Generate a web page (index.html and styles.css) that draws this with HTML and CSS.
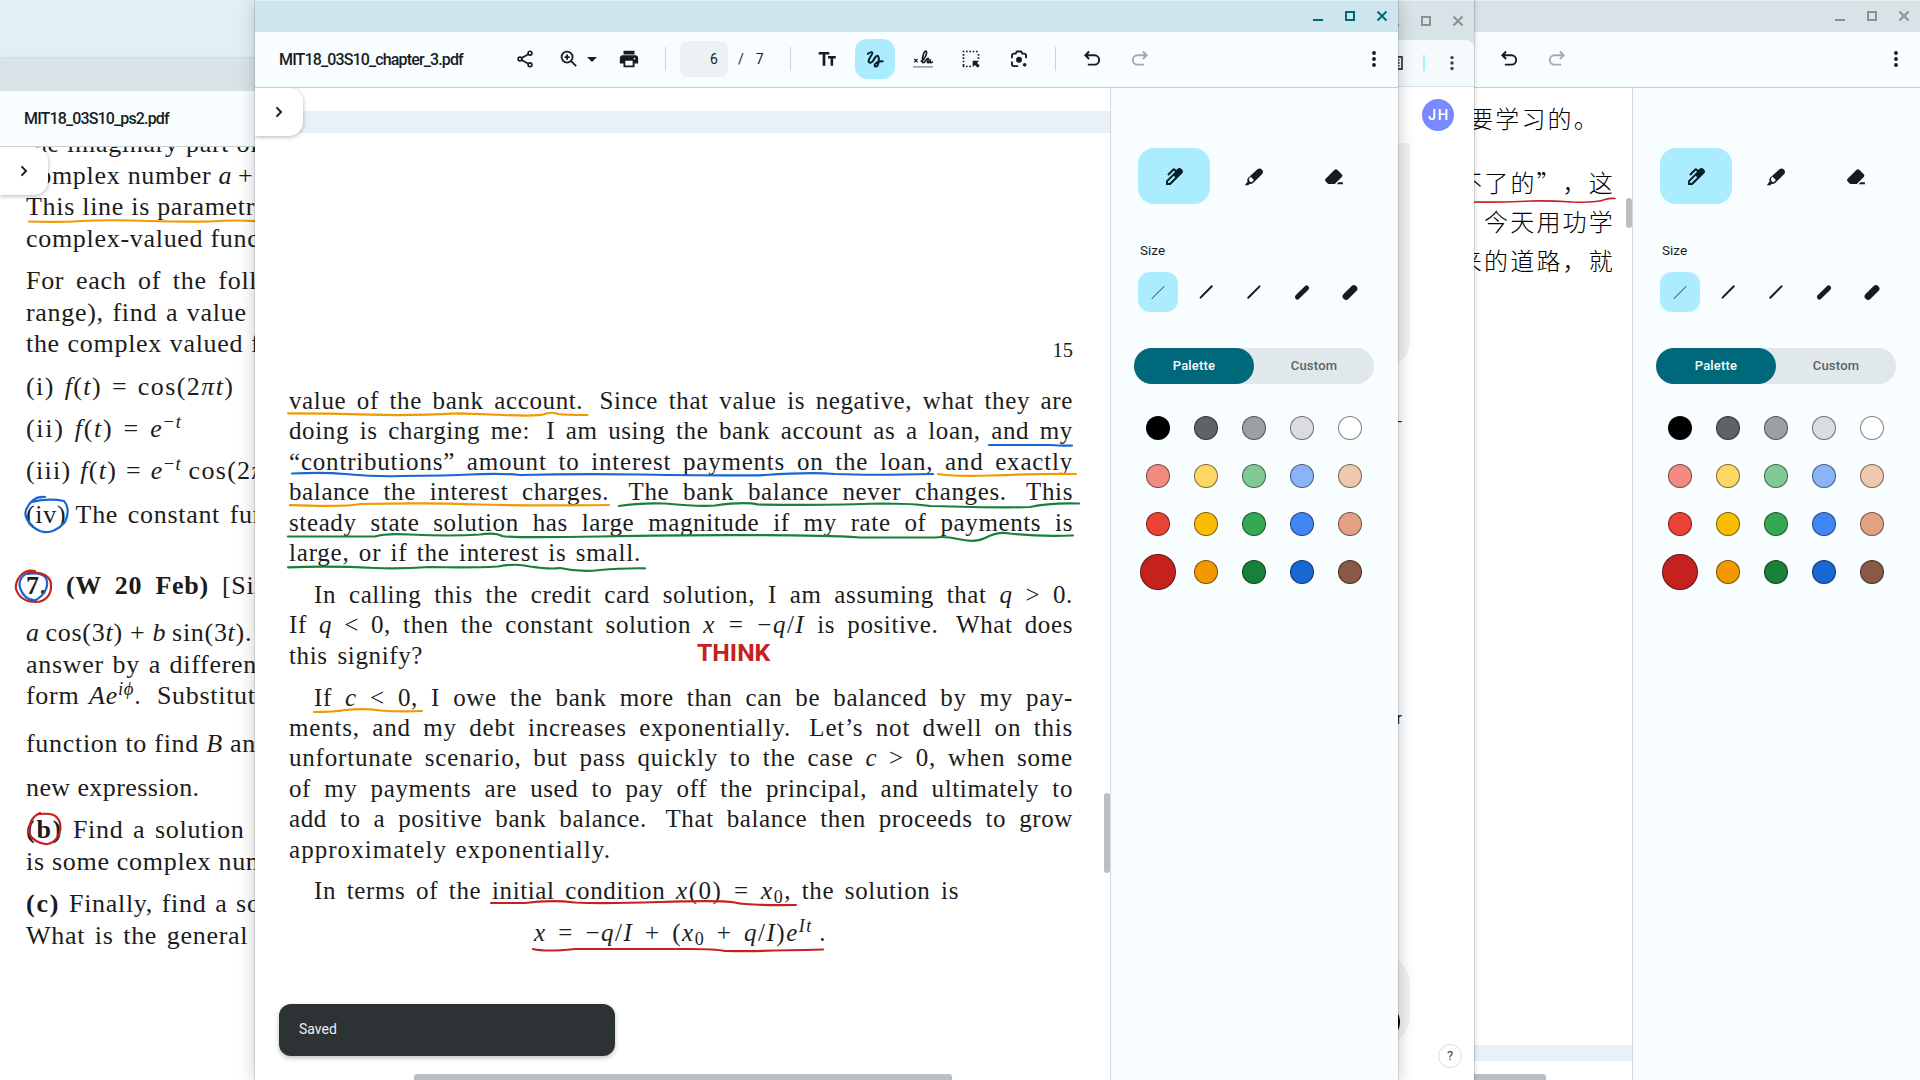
FILE: index.html
```html
<!DOCTYPE html>
<html lang="en">
<head>
<meta charset="utf-8">
<title>MIT18_03S10_chapter_3.pdf</title>
<link rel="stylesheet" href="styles.css">
</head>
<body>
<svg class="defs" width="0" height="0">
  <symbol id="share" viewBox="0 0 24 24"><g fill="none" stroke="currentColor" stroke-width="2"><circle cx="18" cy="5" r="2.3"/><circle cx="6" cy="12" r="2.3"/><circle cx="18" cy="19" r="2.3"/><path d="M8 10.8l8-4.6M8 13.2l8 4.6"/></g></symbol>
  <symbol id="zoomin" viewBox="0 0 24 24"><g fill="none" stroke="currentColor" stroke-width="2.2"><circle cx="9.7" cy="9.7" r="6.6"/><path d="M14.6 14.6l6 6M9.7 6.6v6.2M6.6 9.7h6.2"/></g></symbol>
  <symbol id="print" viewBox="0 0 24 24"><path fill="currentColor" fill-rule="evenodd" d="M18 7H6V3h12zM19 8H5c-1.7 0-3 1.3-3 3v6h4v4h12v-4h4v-6c0-1.700-1.300-3-3-3zm-3 11H8v-5h8zm2-6.500a1 1 0 1 1 0-2 1 1 0 0 1 0 2z"/></symbol>
  <symbol id="text" viewBox="0 0 24 24"><path fill="currentColor" d="M2 3.500v3.200h4.800V20h3.200V6.700h4.800V3.500zM22.500 8.500h-9.300v3h3.100V20h3.100v-8.500h3.100z"/></symbol>
  <symbol id="draw" viewBox="0 0 24 24"><path fill="none" stroke="currentColor" stroke-width="2.400" stroke-linecap="round" d="M3.500 5.800C5 4.700 7.400 2.900 8.600 4.200 10.200 6 4 11.300 4.300 14.500c.2 2.600 3 2.400 4.600.7C11.200 12.800 12 8 14.600 8c3.600 0 1.800 13-1.300 13-3.900 0-1.300-6.600 7.900-6.300"/></symbol>
  <symbol id="sign" viewBox="0 0 24 24"><path fill="none" stroke="currentColor" stroke-width="2" stroke-linecap="round" d="M10 14.800C15 12 17.800 3.200 15.500 2.500 12.500 2 9.800 15.800 12.300 16.500c2 .3 3.500-5.300 5.700-5.200 1.800.2-2 4.800-.2 5.200 1.500.2 2.500-2 3.200-4-.6 2.700-.8 4 .5 4 .7 0 1.300-.5 1.700-1"/><path stroke="currentColor" stroke-width="1.400" d="M1.500 12l4 4M5.500 12l-4 4"/><path stroke="currentColor" stroke-width="1.500" stroke-dasharray="1.300 1.100" d="M.5 21.500h23"/></symbol>
  <symbol id="select" viewBox="0 0 24 24"><path fill="none" stroke="currentColor" stroke-width="2" stroke-dasharray="2 2" d="M2 3h20M3 6v14M21 6v8M2 21h10"/><path fill="currentColor" d="M14 14h8l-2.800 2.500L22.500 20 20 22.500l-3.300-3.300L14 22z"/></symbol>
  <symbol id="lens" viewBox="0 0 24 24"><path fill="none" stroke="currentColor" stroke-width="2.200" d="M3.500 11V8c0-1.500 1-2.500 2.500-2.500h2L9.500 3h5L16 5.500h2c1.500 0 2.500 1 2.500 2.500v3M3.500 15v3c0 1.500 1 2.500 2.500 2.500h5"/><circle cx="12" cy="13" r="3.600" fill="currentColor"/><circle cx="18.800" cy="19" r="2.200" fill="currentColor"/></symbol>
  <symbol id="undo" viewBox="0 0 24 24"><path fill="none" stroke="currentColor" stroke-width="2.300" d="M8.500 3L4 7.500 8.500 12M4 7.500h11a5.600 5.600 0 0 1 0 11.200H7"/></symbol>
  <symbol id="redo" viewBox="0 0 24 24"><path fill="none" stroke="currentColor" stroke-width="2.300" d="M15.500 3L20 7.500 15.500 12M20 7.500H9a5.600 5.600 0 0 0 0 11.200h8"/></symbol>
  <symbol id="more" viewBox="0 0 24 24"><g fill="currentColor"><circle cx="12" cy="4.800" r="2.300"/><circle cx="12" cy="12" r="2.300"/><circle cx="12" cy="19.200" r="2.300"/></g></symbol>
  <symbol id="chev" viewBox="0 0 24 24"><path fill="none" stroke="currentColor" stroke-width="2.300" d="M9 6.500l5.500 5.500L9 17.500"/></symbol>
  <symbol id="pen" viewBox="0 0 24 24"><path fill="currentColor" fill-rule="evenodd" d="M2.500 21.500V16.500L13.300 5.700l-1.500-1.400-6.200 6.200-1.700-1.700 7.200-7.200 1.700.2 1.900 1.900 1.600-1.600C18 .7 19.500.9 21.300 2.700c1.800 1.800 2 3.300.7 4.700L7.800 21.500zM4.800 19.200h1.800l6.900-6.900-1.800-1.800-6.900 6.900z"/></symbol>
  <symbol id="marker" viewBox="0 0 24 24"><path fill="currentColor" fill-rule="evenodd" d="M1 21.800l3.300-4.300c-.8-2.200-.2-3.600 1-4.800L15.800 2.900c2-1.700 4-1.400 5.600.1 1.600 1.500 2 3.600.2 5.600L11.200 19c-1.300 1.300-2.700 1.500-4.400 1l-1.600 1.800zM6.300 16.500l1.800 1.800c1 0 1.600-.4 2.300-1.200l1.500-1.500-4-4-1.300 1.400c-.6.700-.8 2-.3 3.500z"/></symbol>
  <symbol id="eraser" viewBox="0 0 24 24"><path fill="currentColor" d="M5 20.500l-3-3.100c-1-1-1-2.200 0-3.200L12.700 3.300c1-1 2.200-1 3.200 0l5.400 5.400c1 1 1 2.200 0 3.200L13 20.500zM17.500 18.200h5.200v2.500h-7.500z"/></symbol>
  <symbol id="wmin" viewBox="0 0 12 12"><path stroke="currentColor" stroke-width="2" d="M1 10h10"/></symbol>
  <symbol id="wmax" viewBox="0 0 12 12"><path fill="none" stroke="currentColor" stroke-width="2" d="M2 2h8v8H2z"/></symbol>
  <symbol id="wclose" viewBox="0 0 12 12"><path stroke="currentColor" stroke-width="2" d="M1.500 1.500l9 9M10.500 1.500l-9 9"/></symbol>
</svg>

<!-- Problem set window -->
<section class="window w-ps2 inactive">
  <div class="titlebar"></div>
  <header class="toolbar"><span class="filename">MIT18_03S10_ps2.pdf</span></header>
  <div class="body">
    <main class="doc">
      <div class="page ps">
        <p class="l0">the imaginary part of</p>
        <p>complex number <i>a</i>&thinsp;<span class="op">+</span></p>
        <p>This line is parametrized</p>
        <p>complex-valued function</p>
        <p class="g10 w4">For each of the following</p>
        <p class="w1">range), find a value of</p>
        <p class="w0">the complex valued fun</p>
        <p class="g10 m1">(i) <i>f</i>(<i>t</i>) = cos(2<i>πt</i>)</p>
        <p class="g10 m2">(ii) <i>f</i>(<i>t</i>) = <i>e</i><sup>−<i>t</i></sup></p>
        <p class="g10 m3">(iii) <i>f</i>(<i>t</i>) = <i>e</i><sup>−<i>t</i></sup>&thinsp;cos(2<i>πt</i>)</p>
        <p class="g12 w2">(iv) The constant function</p>
        <p class="g40 w5"><b>7. &thinsp;(W 20 Feb)</b> [Similar</p>
        <p class="g15"><i>a</i>&thinsp;cos(3<i>t</i>) + <i>b</i>&thinsp;sin(3<i>t</i>).</p>
        <p class="w1">answer by a different</p>
        <p class="w2">form <i>Ae</i><sup><i>iϕ</i></sup>. &thinsp;Substitute</p>
        <p class="g16">function to find <i>B</i> and</p>
        <p class="g12 tight">new expression.</p>
        <p class="g11 w2"><b class="wide">(b)</b> Find a solution of</p>
        <p>is some complex number</p>
        <p class="g10 w1"><b class="wide">(c)</b> Finally, find a solution</p>
        <p class="w2">What is the general</p>
      </div>
      <svg class="ink" viewBox="0 147 855 933" width="855" height="933">
        <path class="orange" d="M29 221.500Q60 222.500 80 221 110 219.500 150 221 180 222 210 221.500 235 219.500 262 221.500"/>
        <path class="blue" d="M45 497C35 496 29 503 26 510C23 519 33 528 40 531C50 535 60 528 65 522C70 512 67 504 64 501Q48 498 32 502"/>
        <path class="blue" d="M34 572C24 572 18 579 20 588C23 596 28 601 36 600C46 594 49 585 46 578Q41 572 27 574"/>
        <path class="red" d="M35 571C22 568 15 581 16 589C19 598 27 602 36 602C45 602 51 595 51 587C52 577 43 571 28 573"/>
        <path class="red" d="M40 813C33 816 29 822 29 832C30 839 41 845 48 844C56 842 62 833 60 823C57 814 51 813 39 814"/>
      </svg>
      <button class="tab"><svg width="20" height="20"><use href="#chev"/></svg></button>
    </main>
  </div>
</section>

<!-- Chinese document window -->
<section class="window w-cn inactive">
  <div class="titlebar"><svg width="12" height="12"><use href="#wmin"/></svg><svg width="12" height="12"><use href="#wmax"/></svg><svg width="12" height="12"><use href="#wclose"/></svg></div>
  <header class="toolbar">
    <div class="tools">
      <span class="btn"><svg width="20" height="20"><use href="#undo"/></svg></span>
      <span class="btn off"><svg width="20" height="20"><use href="#redo"/></svg></span>
    </div>
    <span class="btn more"><svg width="20" height="20"><use href="#more"/></svg></span>
  </header>
  <div class="body">
    <main class="doc">
      <div class="page cn" lang="zh">
        <p class="first">要学习的。</p>
        <p class="second">不了的<span class="q">”</span>，这</p>
        <p>今天用功学</p>
        <p>来的道路，就</p>
      </div>
      <div class="pagegap"></div>
      <svg class="ink" viewBox="1400 88 232 992" width="232" height="992">
        <path class="red thin" d="M1470 202Q1500 202.500 1530 201Q1550 200.500 1572 202Q1596 203 1605 199.500Q1610 198 1615 198.500"/>
      </svg>
      <div class="vbar"></div><div class="hbar"></div>
    </main>
    <aside class="panel">
      <div class="kinds"><span class="kind on"><svg width="20" height="20"><use href="#pen"/></svg></span><span class="kind"><svg width="20" height="20"><use href="#marker"/></svg></span><span class="kind"><svg width="20" height="20"><use href="#eraser"/></svg></span></div>
      <div class="label">Size</div>
      <div class="sizes"><span class="size on"><i class="s1"></i></span><span class="size"><i class="s2"></i></span><span class="size"><i class="s3"></i></span><span class="size"><i class="s4"></i></span><span class="size"><i class="s5"></i></span></div>
      <div class="seg"><span class="on">Palette</span><span>Custom</span></div>
      <div class="swatches">
        <i class="c1"></i><i class="c2"></i><i class="c3"></i><i class="c4"></i><i class="c5"></i>
        <i class="c6"></i><i class="c7"></i><i class="c8"></i><i class="c9"></i><i class="c10"></i>
        <i class="c11"></i><i class="c12"></i><i class="c13"></i><i class="c14"></i><i class="c15"></i>
        <i class="c16 big"></i><i class="c17"></i><i class="c18"></i><i class="c19"></i><i class="c20"></i>
      </div>
    </aside>
  </div>
</section>

<!-- Chat window -->
<section class="window w-chat inactive">
  <div class="titlebar"><svg width="12" height="12"><use href="#wmin"/></svg><svg width="12" height="12"><use href="#wmax"/></svg><svg width="12" height="12"><use href="#wclose"/></svg></div>
  <div class="chatbar">
    <svg width="16" height="16" viewBox="0 0 16 16"><path fill="none" stroke="#37474b" stroke-width="1.800" d="M1 2h13v12H1zM5 5.200h6.500M5 8h6.500M5 10.800h6.500"/></svg>
    <span class="bar"></span>
    <svg width="18" height="18" viewBox="0 0 24 24"><use href="#more"/></svg>
  </div>
  <div class="chat">
    <span class="avatar">JH</span>
    <div class="card top"></div>
    <div class="frag f1">-</div>
    <div class="frag f2">r</div>
    <div class="card low"><span class="send"></span></div>
    <span class="help">?</span>
  </div>
</section>

<!-- Chapter 3 window -->
<section class="window w-main">
  <div class="titlebar"><svg width="12" height="12"><use href="#wmin"/></svg><svg width="12" height="12"><use href="#wmax"/></svg><svg width="12" height="12"><use href="#wclose"/></svg></div>
  <header class="toolbar">
    <span class="filename">MIT18_03S10_chapter_3.pdf</span>
    <div class="tools">
      <span class="btn"><svg width="20" height="20"><use href="#share"/></svg></span>
      <span class="btn z"><svg width="20" height="20"><use href="#zoomin"/></svg></span>
      <span class="caret"></span>
      <span class="btn p"><svg width="22" height="22"><use href="#print"/></svg></span>
      <span class="sep a"></span>
      <span class="pageno">6</span><span class="slash">/</span><span class="total">7</span>
      <span class="sep b"></span>
      <span class="btn"><svg width="20" height="20"><use href="#text"/></svg></span>
      <span class="btn on"><svg width="20" height="20"><use href="#draw"/></svg></span>
      <span class="btn"><svg width="20" height="20"><use href="#sign"/></svg></span>
      <span class="btn"><svg width="20" height="20"><use href="#select"/></svg></span>
      <span class="btn"><svg width="20" height="20"><use href="#lens"/></svg></span>
      <span class="sep c"></span>
      <span class="btn"><svg width="20" height="20"><use href="#undo"/></svg></span>
      <span class="btn off"><svg width="20" height="20"><use href="#redo"/></svg></span>
    </div>
    <span class="btn more"><svg width="20" height="20"><use href="#more"/></svg></span>
  </header>
  <div class="body">
    <main class="doc">
      <div class="pagegap"></div>
      <div class="page ch">
        <div class="folio">15</div>
        <p>value of the bank account. &thinsp;Since that value is negative, what they are</p>
        <p>doing is charging me: &thinsp;I am using the bank account as a loan, and my</p>
        <p class="loose">“contributions” amount to interest payments on the loan, and exactly</p>
        <p>balance the interest charges. &thinsp;The bank balance never changes. &thinsp;This</p>
        <p>steady state solution has large magnitude if my rate of payments is</p>
        <p class="short loose" style="width:352px">large, or if the interest is small.</p>
        <p class="para">In calling this the credit card solution, I am assuming that <i>q</i> &gt; 0.</p>
        <p>If <i>q</i> &lt; 0, then the constant solution <span class="math"><i>x</i> = −<i>q</i>/<i>I</i></span> is positive. &thinsp;What does</p>
        <p class="short" style="width:134px">this signify?</p>
        <p class="para">If <i>c</i> &lt; 0, I owe the bank more than can be balanced by my pay-</p>
        <p class="loose">ments, and my debt increases exponentially. &thinsp;Let’s not dwell on this</p>
        <p class="loose">unfortunate scenario, but pass quickly to the case <i>c</i> &gt; 0, when some</p>
        <p>of my payments are used to pay off the principal, and ultimately to</p>
        <p>add to a positive bank balance. &thinsp;That balance then proceeds to grow</p>
        <p class="short looser" style="width:322px">approximately exponentially.</p>
        <p class="para short" style="width:670px">In terms of the initial condition <span class="math"><i>x</i>(0) = <i>x</i><sub>0</sub></span>, the solution is</p>
        <p class="eq"><i>x</i> = −<i>q</i>/<i>I</i> + (<i>x</i><sub>0</sub> + <i>q</i>/<i>I</i>)<i>e</i><sup><i>It</i></sup>&thinsp;.</p>
      </div>
      <svg class="ink" viewBox="255 88 855 992" width="855" height="992">
        <path class="orange" d="M288 413.300Q330 413.300 370 414.600T458 413.400Q480 414 503 415Q540 416.500 545 414Q552 411.500 558 414Q565 415 587.500 415"/>
        <path class="blue" d="M989 445H1050Q1065 446 1072 445.500"/>
        <path class="blue" d="M292 473.500Q325 472 345 474Q380 477 400 476Q450 475.500 470 474.500Q500 473 520 475Q580 473.500 640 474.500Q740 476 765 475Q810 472 835 474Q870 475.500 933 474"/>
        <path class="orange" d="M938 474Q950 476.500 990 475.500Q1040 473.500 1076 474"/>
        <path class="orange" d="M290 505.200Q345 507 360 504Q430 502.500 480 504.500Q530 506 609 505"/>
        <path class="green" d="M619 506Q640 502.500 665 503.500Q700 507 715 505.500Q745 501.500 758 504.500Q830 505.500 880 503.500Q915 503.500 930 506Q1000 508 1030 507Q1050 502.500 1079 503.500"/>
        <path class="green" d="M288 536.500H375Q385 533 410 534.500Q450 536.500 480 534.500Q495 532 502 536Q510 538 600 536.500T740 535.200Q820 535 860 537.500H935Q945 536 958 539Q975 543 985 538Q998 531 1010 533.500Q1040 537 1073 535.500"/>
        <path class="green" d="M288 567.300Q330 565.500 375 568Q400 569 430 567Q470 568 498 566.500Q515 563 530 566.500Q550 569.500 560 568Q580 572.500 600 570Q620 568 645 568.300"/>
        <path class="orange" d="M314 712Q335 712 345 710Q365 708 380 710.500Q400 712 422 711"/>
        <path class="red" d="M491 903H525Q550 899.500 575 902.500Q600 904 660 902T735 902.500Q745 905.500 796 905"/>
        <path class="red" d="M533 949Q545 952 575 949H690Q715 949 725 951Q745 951.500 823 949.500"/>
      </svg>
      <div class="think">THINK</div>
      <button class="tab"><svg width="20" height="20"><use href="#chev"/></svg></button>
      <div class="vbar"></div><div class="hbar"></div>
      <div class="toast">Saved</div>
    </main>
    <aside class="panel">
      <div class="kinds"><span class="kind on"><svg width="20" height="20"><use href="#pen"/></svg></span><span class="kind"><svg width="20" height="20"><use href="#marker"/></svg></span><span class="kind"><svg width="20" height="20"><use href="#eraser"/></svg></span></div>
      <div class="label">Size</div>
      <div class="sizes"><span class="size on"><i class="s1"></i></span><span class="size"><i class="s2"></i></span><span class="size"><i class="s3"></i></span><span class="size"><i class="s4"></i></span><span class="size"><i class="s5"></i></span></div>
      <div class="seg"><span class="on">Palette</span><span>Custom</span></div>
      <div class="swatches">
        <i class="c1"></i><i class="c2"></i><i class="c3"></i><i class="c4"></i><i class="c5"></i>
        <i class="c6"></i><i class="c7"></i><i class="c8"></i><i class="c9"></i><i class="c10"></i>
        <i class="c11"></i><i class="c12"></i><i class="c13"></i><i class="c14"></i><i class="c15"></i>
        <i class="c16 big"></i><i class="c17"></i><i class="c18"></i><i class="c19"></i><i class="c20"></i>
      </div>
    </aside>
  </div>
</section>
</body>
</html>
```
FILE: styles.css
```css
* { box-sizing: border-box; }
body {
  margin: 0;
  width: 1920px;
  height: 1080px;
  overflow: hidden;
  position: relative;
  background: #e2f0f5;
  font-family: Roboto, "Liberation Sans", sans-serif;
  color: #171d1e;
}
svg { display: block; flex: none; }
.defs { position: absolute; }
p { margin: 0; }

/* windows on the desktop */
.window {
  position: absolute;
  display: flex;
  flex-direction: column;
  background: #fff;
  box-shadow: 0 0 0 1px rgba(0, 0, 0, .1), 0 2px 16px rgba(0, 0, 0, .22);
  overflow: hidden;
}
.w-ps2 { left: 0; top: 59px; width: 855px; height: 1021px; box-shadow: 0 0 0 1px rgba(0, 0, 0, .08), 0 0 6px rgba(0, 0, 0, .1); }
.w-cn { left: 1400px; top: 0; width: 520px; height: 1080px; }
.w-chat { left: 800px; top: 0; width: 674px; height: 1080px; box-shadow: 0 0 0 1px rgba(0, 0, 0, .1), 0 0 6px rgba(0, 0, 0, .2); }
.w-main { left: 255px; top: 0; width: 1143px; height: 1080px; }

.titlebar {
  flex: none;
  height: 32px;
  display: flex;
  justify-content: flex-end;
  align-items: center;
  gap: 20px;
  padding-right: 10px;
  background: #cde6ed;
  color: #00687b;
  box-shadow: inset 0 1px rgba(255, 255, 255, .35);
}
.inactive .titlebar { background: #d7e3e7; color: #899293; }
.toolbar {
  flex: none;
  height: 56px;
  display: flex;
  align-items: center;
  background: #f8fdff;
  border-bottom: 1px solid #c6d0d3;
  padding: 0 4px 1px 24px;
}
.filename { width: 220px; font-size: 16px; font-weight: 500; letter-spacing: -.86px; white-space: nowrap; }
.tools { display: flex; align-items: center; }
.btn { width: 40px; height: 40px; margin-right: 8px; border-radius: 12px; display: grid; place-items: center; flex: none; }
.btn.on { background: #abecff; color: #001f27; }
.btn.off { color: #a5abac; }
.btn.z { margin: 0 -2px 0 -4px; }
.btn.p { margin: 0 16px 0 12px; }
.btn.more { margin: 0 0 0 auto; }
.w-main .tools { margin-left: 6px; }
.w-cn .tools { margin-left: 65px; }
.caret { width: 0; border: 5px solid transparent; border-top-color: currentColor; border-bottom: 0; }
.sep { width: 1px; height: 24px; background: #cbd4d7; flex: none; }
.sep.a { margin-right: 14px; }
.sep.b { margin: 0 16px 0 26px; }
.sep.c { margin: 0 16px 0 8px; }
.pageno { width: 48px; height: 36px; border-radius: 8px; background: #ecf1f4; font-size: 14px; line-height: 36px; padding-left: 30px; }
.slash { font-size: 14px; margin-left: 10px; }
.total { font-size: 14px; margin-left: 12px; width: 8px; }

.body { flex: 1; display: flex; min-height: 0; }
.doc { flex: 1; position: relative; overflow: hidden; background: #fff; min-width: 0; }
.ink { position: absolute; left: 0; top: 0; }
.ink path { fill: none; stroke-width: 2.2; stroke-linecap: round; stroke-linejoin: round; }
.ink .thin { stroke-width: 1.6; }
.orange { stroke: #f29900; }
.blue { stroke: #1967d2; }
.red { stroke: #c5221f; }
.green { stroke: #188038; }

.page { font-family: "Liberation Serif", "Times New Roman", serif; color: #1c1c1c; }
.page p { white-space: nowrap; }
sup, sub { font-size: .72em; line-height: 0; }
sup { vertical-align: .5em; }
sub { vertical-align: -.22em; }

.ch { width: 784px; margin-left: 34px; font-size: 25px; }
.ch p { height: 30.45px; line-height: 30.45px; text-align-last: justify; letter-spacing: .62px; }
.ch .loose { letter-spacing: .8px; }
.ch .looser { letter-spacing: 1.050px; }
.math { letter-spacing: 1.500px; }
.folio { height: 41px; margin: 202px 0 10px; padding-top: 4px; text-align: right; font-size: 20.500px; }
.ch .para { margin-top: 11.300px; padding-left: 25px; }
.ch .eq { margin: 11.500px 0 0 245px; width: 293px; letter-spacing: 1.500px; }

.ps { padding-left: 26px; font-size: 26px; margin-top: -19px; }
.ps p { height: 31.600px; line-height: 31.600px; letter-spacing: .7px; }
.ps .g10 { margin-top: 10.700px; }
.ps .g11 { margin-top: 10.700px; }
.ps .g12 { margin-top: 12.200px; }
.ps .g15 { margin-top: 15.400px; }
.ps .g16 { margin-top: 16.100px; }
.ps .g40 { margin-top: 39.700px; }
.ps .w0 { word-spacing: .5px; }
.ps .w1 { word-spacing: 1.500px; }
.ps .w2 { word-spacing: 2.500px; }
.ps .w4 { word-spacing: 4.500px; }
.ps .w5 { word-spacing: 6px; }
.ps .m1 { letter-spacing: 1.400px; word-spacing: 2px; }
.ps .m2 { letter-spacing: 1.700px; word-spacing: 2px; }
.ps .m3 { letter-spacing: 1.300px; word-spacing: 1px; }
.ps .tight { letter-spacing: .4px; }
.ps .wide { letter-spacing: 1.800px; }

.cn { font-family: "Noto Sans CJK SC", sans-serif; font-weight: 300; color: #000; font-size: 24px; letter-spacing: 2.200px; text-align: right; width: 215px; padding-top: 10px; height: 957px; }
.cn p { height: 39px; line-height: 39px; }
.cn .first { margin: 0 15px 25px 0; }
.q { display: inline-block; width: 26px; text-align: left; }
.w-cn .pagegap { height: 16px; }
.pagegap { background: #e9f0f8; }
.w-main .pagegap { height: 22px; margin-top: 23px; }

.vbar, .hbar { position: absolute; background: #b9bfc2; }
.vbar { right: 0; width: 6px; border-radius: 3px; }
.hbar { bottom: 0; height: 6px; border-radius: 3px 3px 0 0; }
.w-main .vbar { top: 705px; height: 80px; }
.w-main .hbar { left: 159px; width: 538px; }
.w-cn .vbar { top: 110px; height: 30px; }
.w-cn .hbar { left: 0; width: 146px; }

.tab {
  position: absolute; left: 0; top: 0; width: 48px; height: 48px; padding: 0 0 0 14px;
  border: 0; border-radius: 0 14px 14px 0; background: #fff; color: #171d1e;
  box-shadow: 0 1px 4px rgba(0, 0, 0, .3);
}
.think { position: absolute; left: 442px; top: 551px; font-size: 24.800px; line-height: 28px; font-weight: 700; color: #c5221f; }
.toast {
  position: absolute; left: 24px; bottom: 24px; width: 336px; height: 52px; padding-left: 20px;
  border-radius: 12px; background: #2d3235; color: #eceff1; font-size: 14px; line-height: 51px;
  box-shadow: 0 2px 5px rgba(0, 0, 0, .25);
}

/* annotation side panel */
.panel { flex: none; width: 288px; border-left: 1px solid #d3dadd; background: #f8fdff; padding: 60px 24px 0 23px; }
.kinds { display: flex; gap: 8px; margin-left: 4px; }
.kind { width: 72px; height: 56px; flex: none; padding-top: 2px; border-radius: 16px; display: grid; place-items: center; }
.kind.on, .size.on { background: #abecff; color: #001f27; }
.label { font-size: 13.500px; line-height: 20px; margin: 36px 0 12px 6px; }
.sizes { display: flex; gap: 8px; margin-left: 4px; }
.size { width: 40px; height: 40px; flex: none; border-radius: 12px; display: grid; place-items: center; }
.size i { display: block; background: #171d1e; border-radius: 4px; transform: rotate(-45deg); }
.s1 { width: 18px; height: 1px; opacity: .7; }
.s2 { width: 18px; height: 1.500px; }
.s3 { width: 18px; height: 2.300px; }
.s4 { width: 18px; height: 5px; }
.s5 { width: 18px; height: 7px; }
.seg { display: flex; height: 36px; margin-top: 36px; border-radius: 18px; background: #e0e8eb; font-size: 13px; font-weight: 500; letter-spacing: .2px; }
.seg span { flex: 1; display: grid; place-items: center; border-radius: 18px; color: #566568; line-height: 15px; padding-bottom: 1px; }
.seg .on { background: #00687b; color: #f8fdff; }
.swatches { display: grid; grid-template-columns: repeat(5, 48px); grid-auto-rows: 48px; place-items: center; margin-top: 20px; }
.swatches i { width: 24px; height: 24px; border-radius: 50%; border: 1px solid rgba(0, 0, 0, .5); background-clip: border-box; background-origin: border-box; }
.swatches .big { width: 36px; height: 36px; }
.c1 { background: #000; } .c2 { background: #5f6368; } .c3 { background: #9aa0a6; } .c4 { background: #dadce0; } .c5 { background: #fff; }
.c6 { background: #f28b82; } .c7 { background: #fdd663; } .c8 { background: #81c995; } .c9 { background: #8ab4f8; } .c10 { background: #eec9ae; }
.c11 { background: #ea4335; } .c12 { background: #fbbc04; } .c13 { background: #34a853; } .c14 { background: #4285f4; } .c15 { background: #e2a185; }
.c16 { background: #c5221f; } .c17 { background: #f29900; } .c18 { background: #188038; } .c19 { background: #1967d2; } .c20 { background: #885945; }

/* chat window */
.w-chat .titlebar { height: 40px; padding-top: 2px; }
.chatbar { flex: none; display: flex; justify-content: flex-end; align-items: center; height: 47px; padding-right: 13px; background: #f5fafc; border-bottom: 1px solid #d7e3e7; border-radius: 0 8px 0 0; color: #37474b; box-shadow: 8px -8px 0 #d7e3e7; }
.chatbar .bar { width: 2px; height: 16px; background: #abecff; margin: 0 18px 0 19px; }
.chat { flex: 1; position: relative; background: #fff; }
.avatar { position: absolute; right: 20px; top: 12px; width: 32px; height: 32px; border-radius: 50%; background: #7989ff; color: #fff; font: 600 14px/32px Inter, sans-serif; letter-spacing: 1.800px; text-align: center; padding-left: 2px; }
.card { position: absolute; right: 64px; width: 400px; background: #f1f1f1; }
.card.top { top: 56px; height: 223px; border-radius: 0 0 24px 24px; }
.card.low { top: 868px; height: 90px; border-radius: 28px; }
.send { position: absolute; right: 10px; top: 49px; width: 36px; height: 36px; border-radius: 50%; background: #000; }
.frag { position: absolute; font-size: 16px; line-height: 20px; right: 72px; }
.f1 { top: 325px; }
.f2 { top: 622px; }
.help { position: absolute; right: 12px; top: 957px; width: 24px; height: 24px; border: 1px solid #dedede; border-radius: 50%; font-size: 13px; line-height: 22px; text-align: center; color: #444; }
```
